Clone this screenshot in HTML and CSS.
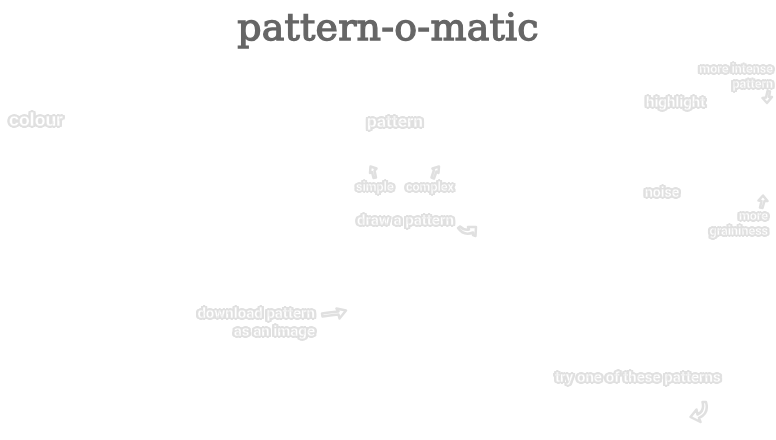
FILE: index.html
```html
<!DOCTYPE html>
<html lang="en">
<head>
    <meta charset="UTF-8">
    <meta name="viewport" content="width=device-width, initial-scale=1.0">
    <title>pattern-o-matic</title>
    <link rel="stylesheet" href="styles.css">
</head>
<body>
    <h1 class="title">pattern-o-matic</h1>

    <div class="hints">
        <div class="hint big colour">colour</div>
        <div class="hint big pattern">pattern</div>
        <div class="hint big highlight">highlight</div>
        <div class="hint noise">noise</div>

        <div class="hint small intense">more intense<br>pattern</div>
        <svg class="arrow a-intense" width="14" height="16" viewBox="0 0 14 16">
            <path d="M7.500 2 L10 2.500 L9 8 L12 8 L7 14 L2.500 9 L6 8.500 Z"/>
        </svg>

        <svg class="arrow a-simple" width="12" height="15" viewBox="0 0 12 15">
            <path d="M3.500 1.500 L9.500 3.500 L7.500 5.500 L9 12.500 L6.500 13 L5 7 L3 8 Z"/>
        </svg>
        <div class="hint small simple">simple</div>
        <svg class="arrow a-complex" width="12" height="15" viewBox="0 0 12 15">
            <path d="M10 1.500 L9.500 8 L7.500 6.500 L5 13.500 L2.500 12.500 L5 5 L3.500 3.500 Z"/>
        </svg>
        <div class="hint small complex">complex</div>

        <div class="hint mid draw">draw a pattern</div>
        <svg class="arrow a-draw" width="22" height="14" viewBox="0 0 22 14">
            <path d="M2 4 L4 2.500 C7 5.500 10 6 13 5.500 L12 3 L20 3 L19.500 12 L17 11 L17 8.500 C11 11 5.500 9 2 4 Z"/>
        </svg>

        <svg class="arrow a-more" width="14" height="16" viewBox="0 0 14 16">
            <path d="M8 1.500 L12.500 7 L9.500 7 L7.500 14 L5 13.500 L6.500 7 L3.500 6.500 Z"/>
        </svg>
        <div class="hint small grain">more<br>graininess</div>

        <div class="hint mid download">download pattern<br>as an image</div>
        <svg class="arrow a-download" width="28" height="14" viewBox="0 0 28 14">
            <path d="M2 7.500 C7 6.500 12 6 18.500 5.500 L16.500 2.500 L26 4.500 L19.500 12.500 L18.500 8.500 C12 9 7 10 2.500 10.500 Z"/>
        </svg>

        <div class="hint mid tryone">try one of these patterns</div>
        <svg class="arrow a-try" width="22" height="26" viewBox="0 0 22 26">
            <path d="M14.500 2 L18 2 C20 9 18 15 11 18 L12.500 22 L2.500 17 L8.500 9.500 L9.500 14.500 C14 12.500 16 8 14.500 2 Z"/>
        </svg>
    </div>
</body>
</html>
```

FILE: styles.css
```css
body {
    margin: 0;
    height: 440px;
    overflow: hidden;
    background: #fff;
    font-family: Roboto, "Open Sans", sans-serif;
}
.title {
    margin: 0;
    padding-top: 4px;
    text-align: center;
    font-family: "DejaVu Serif", serif;
    font-size: 38px;
    line-height: 46px;
    font-weight: 400;
    letter-spacing: 0.2px;
    color: #666;
    -webkit-text-stroke: 1.3px #666;
    filter: blur(0.3px);
}
.hints {
    position: absolute;
    top: 0;
    left: 0;
    width: 776px;
    height: 440px;
    filter: blur(0.4px);
}
.hint {
    position: absolute;
    font-weight: 700;
    color: #fff;
    white-space: nowrap;
    -webkit-text-stroke: 0.3px #e0e0e0;
    text-shadow:
        -2px 0 0 #e0e0e0, 2px 0 0 #e0e0e0, 0 -2px 0 #e0e0e0, 0 2px 0 #e0e0e0,
        -1px -1px 0 #e0e0e0, 1px -1px 0 #e0e0e0, -1px 1px 0 #e0e0e0, 1px 1px 0 #e0e0e0,
        -2px -1px 0 #e0e0e0, 2px -1px 0 #e0e0e0, -2px 1px 0 #e0e0e0, 2px 1px 0 #e0e0e0;
}
.big { font-size: 17.300px; line-height: 22px; }
.mid { font-size: 15px; line-height: 18px; }
.small { font-size: 12.500px; line-height: 15px; }
.colour { left: 9px; top: 109px; font-size: 19px; }
.pattern { left: 367px; top: 110px; }
.highlight { left: 646px; top: 91px; font-size: 15px; }
.noise { left: 645px; top: 181px; font-size: 14px; line-height: 22px; }
.intense { right: 3px; top: 61px; text-align: right; }
.simple { left: 356px; top: 179px; }
.complex { left: 406px; top: 179px; }
.draw { left: 357px; top: 211px; }
.grain { right: 8px; top: 208px; text-align: right; }
.download { right: 461px; top: 304px; text-align: right; }
.tryone { left: 555px; top: 368px; }
.arrow {
    position: absolute;
    fill: #fff;
    stroke: #e0e0e0;
    stroke-width: 2.500;
    stroke-linejoin: round;
}
.a-intense { left: 760px; top: 89px; }
.a-simple { left: 367px; top: 165px; }
.a-complex { left: 429px; top: 165px; }
.a-draw { left: 456px; top: 224px; }
.a-more { left: 755px; top: 194px; }
.a-download { left: 320px; top: 306px; }
.a-try { left: 688px; top: 400px; }
```
